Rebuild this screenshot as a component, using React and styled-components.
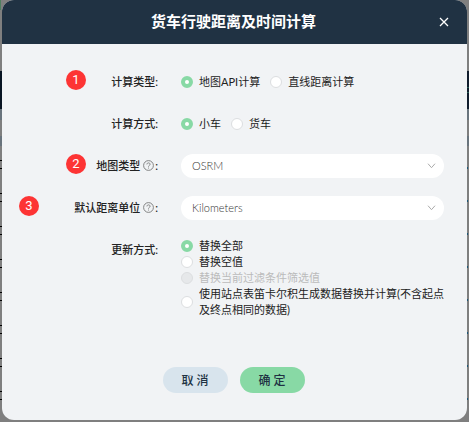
import React, { useState } from "react";
import styled, { createGlobalStyle, css } from "styled-components";

const GlobalStyle = createGlobalStyle`
  * {
    box-sizing: border-box;
  }

  body {
    margin: 0;
    background-color: #7f7f7f;
    font-family: Lato, "Noto Sans CJK SC", sans-serif;
    font-size: 11px;
    color: #222;
  }
`;

const Page = styled.div`
  min-height: 100vh;
  display: grid;
  grid-template-columns: 2px 1fr 2px;
  align-items: start;
`;

const edge = css`
  align-self: stretch;
  min-height: 100vh;
  background-repeat: no-repeat;
`;

const LeftEdge = styled.div`
  ${edge}
  background-image: linear-gradient(
      transparent 71px,
      #091523 71px 109px,
      #69747d 109px 120px,
      transparent 120px 136px,
      #69747d 136px 146px,
      transparent 146px
    ),
    repeating-linear-gradient(
      #000 0 1px,
      transparent 1px 8px,
      #000 8px 9px,
      transparent 9px 33px
    ),
    linear-gradient(#4f7f5f 10px, transparent 10px);
  background-position: 0 0, 0 160px, 0 0;
  background-size: 100% 100%, 100% 100%, 1px 100%;
`;

const RightEdge = styled.div`
  ${edge}
  background-image: linear-gradient(
      transparent 71px,
      #111d2d 71px 87px,
      #285c52 87px 88px,
      #111d2d 88px 92px,
      #285c52 92px 93px,
      #111d2d 93px 109px,
      #69747d 109px 120px,
      transparent 120px 136px,
      #69747d 136px 146px,
      transparent 146px
    ),
    repeating-linear-gradient(#1f5877 0 2px, transparent 2px 33px);
  background-position: 0 0, 0 167px;
  background-size: 100% 100%, 1px 100%;
`;

const Dialog = styled.section`
  min-width: 0;
  background-color: #f1f3f5;
  border-radius: 12px;
  overflow: hidden;
`;

const Header = styled.header`
  height: 44px;
  padding: 0 16px 0 28px;
  display: flex;
  align-items: center;
  background-color: #203243;
  color: #fff;
`;

const Title = styled.h1`
  flex: 1;
  margin: 0;
  padding-bottom: 2px;
  font-size: 15px;
  font-weight: 700;
  line-height: 24px;
  text-align: center;
`;

const CloseButton = styled.button`
  width: 14px;
  height: 14px;
  padding: 0;
  border: 0;
  display: grid;
  place-items: center;
  background: none;
  color: inherit;
  cursor: pointer;
`;

const Form = styled.form`
  padding: 26px 23px 27px 0;
  display: flex;
  flex-direction: column;
  gap: 18px;
`;

const Row = styled.div`
  position: relative;
  display: grid;
  grid-template-columns: 156px 1fr;
  column-gap: 23px;
  align-items: start;
`;

const Badge = styled.span`
  position: absolute;
  top: 0;
  left: ${(props) => (props.$outer ? "17px" : "64px")};
  width: 20px;
  height: 20px;
  border-radius: 50%;
  background-color: #fd3434;
  color: #fff;
  font-family: Roboto, sans-serif;
  font-size: 13px;
  line-height: 20px;
  text-align: center;
`;

const Label = styled.span`
  height: 24px;
  padding-bottom: 2px;
  display: flex;
  align-items: center;
  justify-content: flex-end;
  font-weight: 500;

  svg {
    margin: 0 1px 0 3px;
    color: #777;
  }
`;

const Options = styled.div`
  display: flex;
  flex-direction: ${(props) => (props.$stacked ? "column" : "row")};
  gap: ${(props) => (props.$stacked ? "0" : "10px")};
  min-height: 24px;
  margin-right: -4px;
`;

const Option = styled.label`
  display: flex;
  align-items: center;
  gap: 6px;
  line-height: 16px;
  color: ${(props) => (props.$disabled ? "#bbb" : "inherit")};
`;

const Radio = styled.input`
  appearance: none;
  flex: none;
  width: 12px;
  height: 12px;
  margin: 0;
  border: 1px solid #dcdee0;
  border-radius: 50%;
  background-color: #fff;

  &:checked {
    border: 4px solid #88d9a5;
  }

  &:disabled {
    background-color: #e6e8ea;
  }
`;

const SelectBox = styled.div`
  height: 24px;
  padding-right: 8px;
  display: grid;
  align-items: center;
  border-radius: 12px;
  background-color: #fff;

  select,
  svg {
    grid-area: 1 / 1;
  }

  svg {
    justify-self: end;
    color: #aaa;
    pointer-events: none;
  }
`;

const Select = styled.select`
  appearance: none;
  width: 100%;
  height: 24px;
  padding: 0 16px 2px 11px;
  border: 0;
  background: none;
  color: #333;
  font: inherit;
  font-weight: 300;
`;

const Actions = styled.footer`
  margin-top: 31px;
  padding-left: 21px;
  display: flex;
  justify-content: center;
  gap: 12px;
`;

const Button = styled.button`
  width: 65px;
  height: 26px;
  padding: 0 0 2px;
  border: 0;
  border-radius: 13px;
  background-color: ${(props) => (props.$primary ? "#88d9a5" : "#d8e4ed")};
  color: #203243;
  font-family: inherit;
  font-size: 12px;
  font-weight: 500;
  cursor: pointer;
`;

const CloseIcon = () => (
  <svg width="10" height="10" viewBox="0 0 10 10" aria-hidden="true">
    <path d="M1 1l8 8M9 1l-8 8" stroke="currentColor" strokeWidth="1.3" />
  </svg>
);

const HelpIcon = () => (
  <svg width="11" height="11" viewBox="0 0 11 11" fill="none" aria-hidden="true">
    <circle cx="5.5" cy="5.5" r="4.9" stroke="currentColor" strokeWidth="0.9" />
    <path
      d="M3.9 4.4c0-2 3.2-2 3.2-.1 0 1.1-1.6 1.1-1.6 2.3M5.5 7.6v.9"
      stroke="currentColor"
      strokeWidth="0.9"
    />
  </svg>
);

const ChevronIcon = () => (
  <svg width="9" height="6" viewBox="0 0 9 6" fill="none" aria-hidden="true">
    <path d="M1 .7l3.5 4L8 .7" stroke="currentColor" />
  </svg>
);

const RadioRow = ({ badge, label, name, options, stacked }) => {
  const [value, setValue] = useState(options[0].text);
  return (
    <Row role="radiogroup" aria-labelledby={name}>
      {badge && <Badge>{badge}</Badge>}
      <Label id={name}>{label}:</Label>
      <Options $stacked={stacked}>
        {options.map(({ text, disabled }) => (
          <Option key={text} $disabled={disabled}>
            <Radio
              type="radio"
              name={name}
              checked={value === text}
              disabled={disabled}
              onChange={() => setValue(text)}
            />
            <span>{text}</span>
          </Option>
        ))}
      </Options>
    </Row>
  );
};

const SelectRow = ({ badge, outer, label, name, value }) => (
  <Row>
    <Badge $outer={outer}>{badge}</Badge>
    <Label as="label" htmlFor={name}>
      {label}
      <HelpIcon />:
    </Label>
    <SelectBox>
      <Select id={name} defaultValue={value}>
        <option>{value}</option>
      </Select>
      <ChevronIcon />
    </SelectBox>
  </Row>
);

const App = () => {
  return (
    <>
      <GlobalStyle />
      <Page>
        <LeftEdge />
        <Dialog role="dialog" aria-labelledby="title">
          <Header>
            <Title id="title">货车行驶距离及时间计算</Title>
            <CloseButton type="button" aria-label="关闭">
              <CloseIcon />
            </CloseButton>
          </Header>
          <Form onSubmit={(e) => e.preventDefault()}>
            <RadioRow
              badge="1"
              label="计算类型"
              name="calcType"
              options={[{ text: "地图API计算" }, { text: "直线距离计算" }]}
            />
            <RadioRow
              label="计算方式"
              name="vehicle"
              options={[{ text: "小车" }, { text: "货车" }]}
            />
            <SelectRow badge="2" label="地图类型" name="mapType" value="OSRM" />
            <SelectRow
              badge="3"
              outer
              label="默认距离单位"
              name="unit"
              value="Kilometers"
            />
            <RadioRow
              stacked
              label="更新方式"
              name="update"
              options={[
                { text: "替换全部" },
                { text: "替换空值" },
                { text: "替换当前过滤条件筛选值", disabled: true },
                {
                  text: "使用站点表笛卡尔积生成数据替换并计算(不含起点及终点相同的数据)",
                },
              ]}
            />
            <Actions>
              <Button type="button">取 消</Button>
              <Button type="submit" $primary>
                确 定
              </Button>
            </Actions>
          </Form>
        </Dialog>
        <RightEdge />
      </Page>
    </>
  );
};

export default App;
